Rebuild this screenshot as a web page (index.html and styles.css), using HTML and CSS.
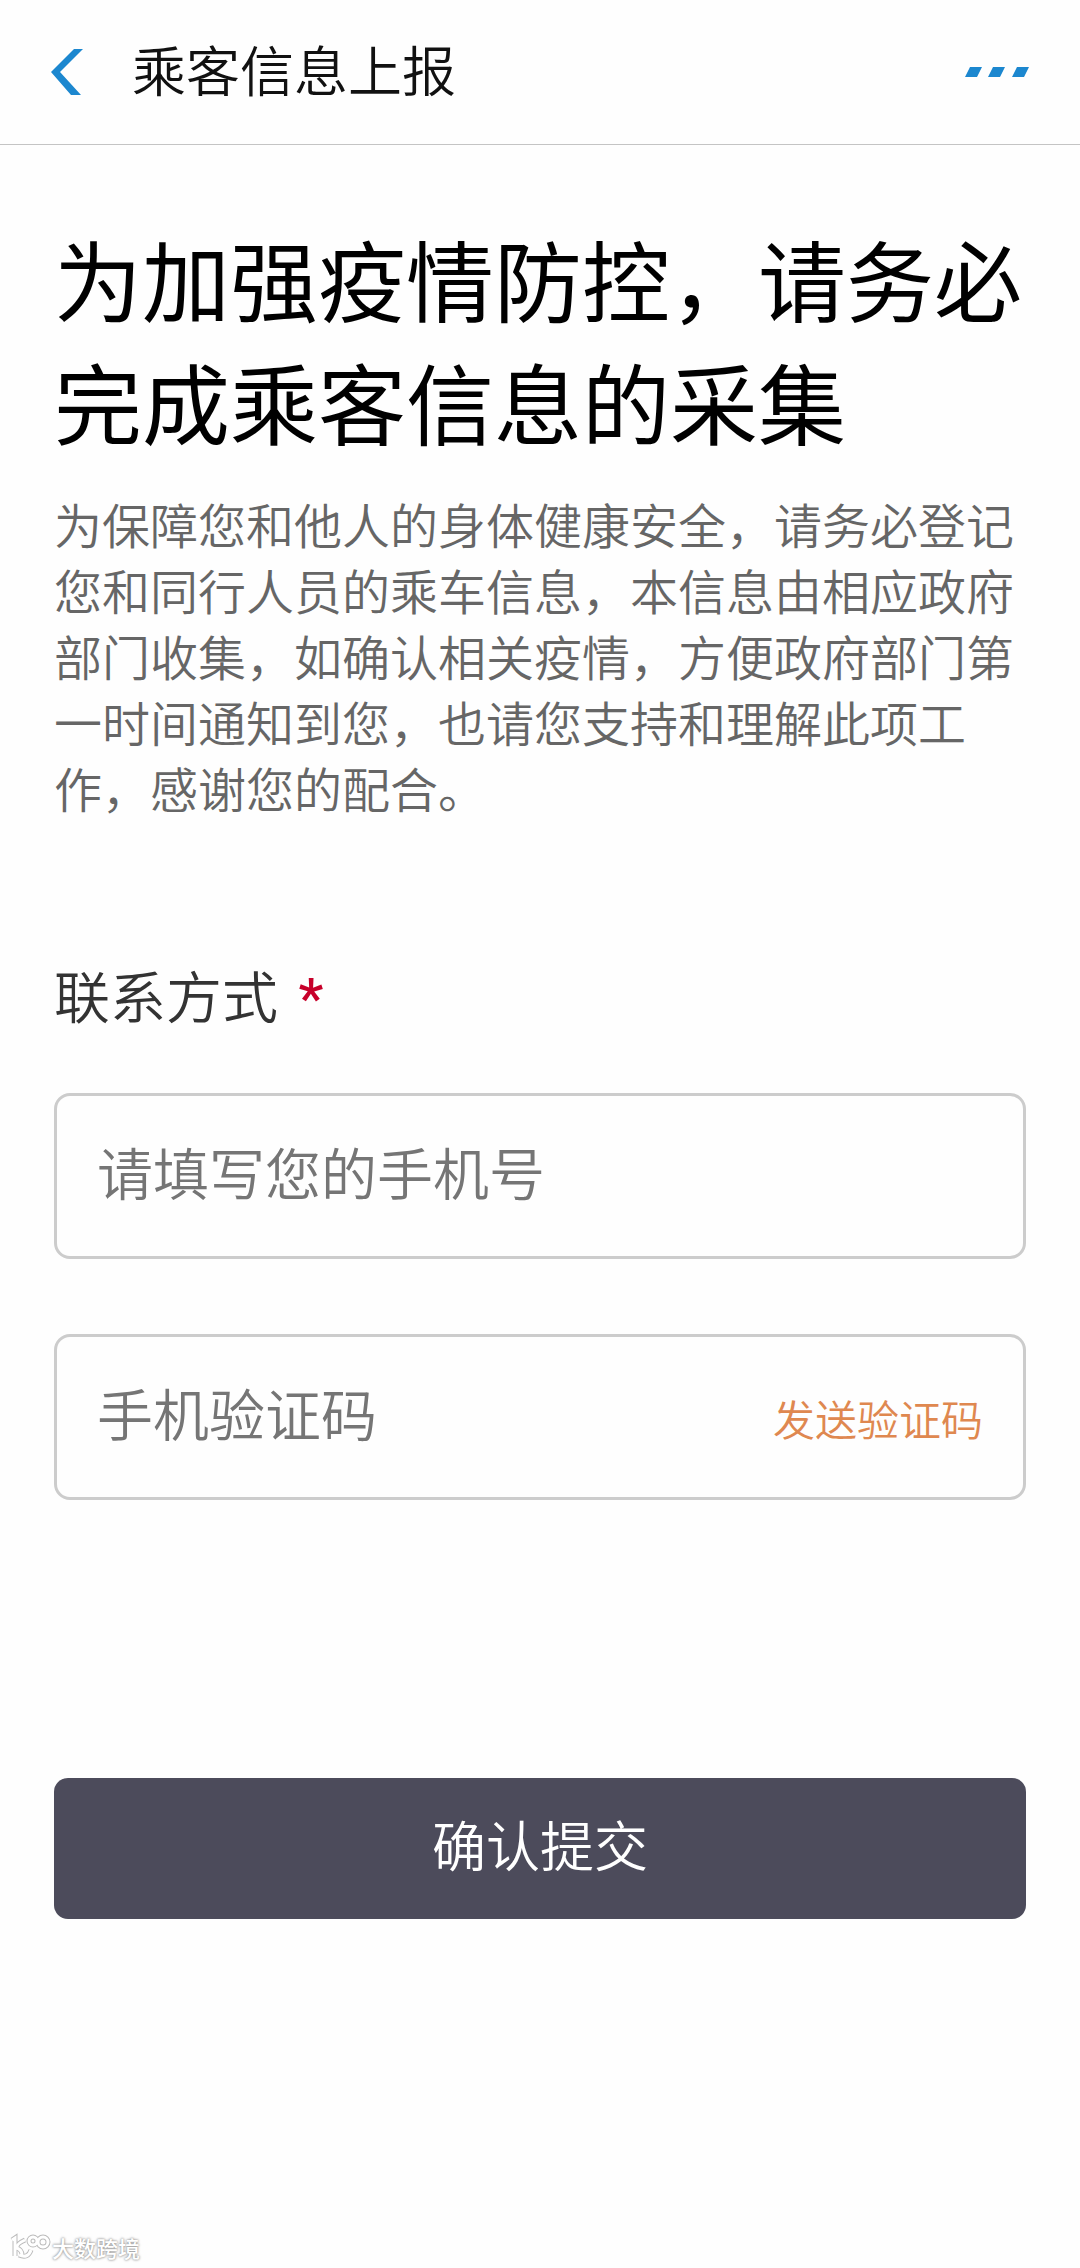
FILE: index.html
```html
<!DOCTYPE html>
<html lang="zh-CN">
<head>
    <meta charset="UTF-8">
    <meta name="viewport" content="width=device-width, initial-scale=1.0">
    <title>乘客信息上报</title>
    <link rel="stylesheet" href="styles.css">
</head>
<body>
<header class="navbar">
    <button type="button" class="icon-btn" aria-label="返回">
        <svg width="32" height="46" viewBox="0 0 32 46"><path d="M23 0H32L9 23L30 46H20L0 23Z" fill="#1c87cf"/></svg>
    </button>
    <span class="navbar-title">乘客信息上报</span>
    <button type="button" class="icon-btn" aria-label="更多">
        <svg width="64" height="10" viewBox="0 0 64 10"><path d="M5 0H17L12 10H0ZM28 0H40L35 10H23ZM52 0H64L59 10H47Z" fill="#1c87cf"/></svg>
    </button>
</header>
<main class="content">
    <h1>为加强疫情防控，请务必完成乘客信息的采集</h1>
    <p class="intro">为保障您和他人的身体健康安全，请务必登记您和同行人员的乘车信息，本信息由相应政府部门收集，如确认相关疫情，方便政府部门第一时间通知到您，也请您支持和理解此项工作，感谢您的配合。</p>
    <form class="form">
        <label class="form-label" for="phoneInput">联系方式 <span class="required">*</span></label>
        <div class="field">
            <input type="tel" id="phoneInput" placeholder="请填写您的手机号">
        </div>
        <div class="field">
            <input type="text" id="codeInput" placeholder="手机验证码" aria-label="手机验证码">
            <button type="button" class="send-btn">发送验证码</button>
        </div>
        <button type="submit" class="submit-btn">确认提交</button>
    </form>
</main>
<footer class="watermark">
    <svg width="42" height="28" viewBox="0 0 42 28" fill="none">
        <g class="mark-edge"><path d="M2 7L5 5V23M15 7Q6 11 7 15Q12 17 12 22M9 22Q18 26 21 17"/><circle cx="23" cy="8" r="4"/><circle cx="33" cy="9" r="5"/></g>
        <g class="mark-line"><path d="M2 7L5 5V23M15 7Q6 11 7 15Q12 17 12 22M9 22Q18 26 21 17"/><circle cx="23" cy="8" r="4"/><circle cx="33" cy="9" r="5"/></g>
    </svg>
    <span>大数跨境</span>
</footer>
</body>
</html>
```
FILE: styles.css
```css
* {
    box-sizing: border-box;
}

body {
    display: flex;
    flex-direction: column;
    min-height: 100vh;
    margin: 0;
    font-family: "Noto Sans CJK SC", sans-serif;
    font-weight: 350;
    color: #333;
    background-color: #fefefe;
}

button,
input {
    padding: 0;
    border: none;
    background: none;
    font: inherit;
}

button {
    cursor: pointer;
}

.navbar {
    display: flex;
    align-items: center;
    height: 145px;
    padding: 0 51px;
    border-bottom: 1px solid #c4c4c4;
}

.navbar-title {
    flex: 1;
    margin-left: 49px;
    padding-bottom: 6px;
    font-size: 54px;
    line-height: 80px;
    color: #111;
}

.icon-btn {
    display: flex;
}

/* Heading and form */
.content {
    padding: 70px 54px 0;
}

h1 {
    margin: 0;
    font-size: 88px;
    font-weight: 400;
    line-height: 123px;
    color: #000;
}

.intro {
    margin: 29px 0 0;
    font-size: 48px;
    line-height: 66px;
    color: #666;
}

.form {
    display: flex;
    flex-direction: column;
    margin-top: 134px;
}

.form-label {
    font-size: 56px;
    line-height: 80px;
}

.required {
    margin-left: 8px;
    font-family: Roboto, sans-serif;
    font-weight: 500;
    color: #c7002a;
}

.field {
    display: flex;
    align-items: center;
    height: 166px;
    padding: 0 40px;
    border: 3px solid #ccc;
    border-radius: 16px;
}

.form-label + .field {
    margin-top: 54px;
}

.field + .field {
    margin-top: 75px;
}

.field input {
    flex: 1;
    min-width: 0;
    height: 100%;
    padding-bottom: 12px;
    font-size: 56px;
    outline: none;
}

.field input::placeholder {
    color: #757575;
    opacity: 1;
}

.send-btn {
    font-size: 42px;
    color: #df8850;
}

.submit-btn {
    height: 141px;
    margin-top: 278px;
    padding-bottom: 10px;
    border-radius: 14px;
    font-size: 54px;
    color: #fff;
    background-color: #4c4b5b;
}

.watermark {
    display: flex;
    align-items: center;
    margin-top: auto;
    padding: 0 10px 6px;
    font-size: 22px;
    font-weight: 500;
    line-height: 30px;
    color: #fff;
    text-shadow: 0 0 2px #999, 0 0 3px #999;
}

.mark-edge {
    stroke: #bbb;
    stroke-width: 5;
}

.mark-line {
    stroke: #fff;
    stroke-width: 3;
}
```
